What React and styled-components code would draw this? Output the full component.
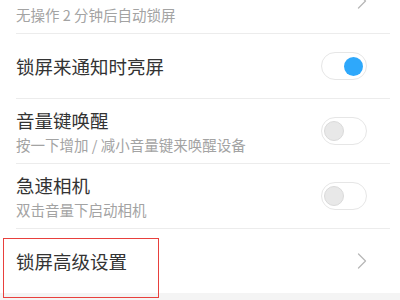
import React from "react";
import styled, { createGlobalStyle } from "styled-components";

const Global = createGlobalStyle`
  html, body {
    margin: 0;
    padding: 0;
    background: #ffffff;
    overflow: hidden;
  }
  body {
    font-family: "Noto Sans CJK SC", "Noto Sans", sans-serif;
  }
`;

const Page = styled.div`
  width: 400px;
  height: 300px;
  overflow: hidden;
  background: #f4f4f4;
`;

const List = styled.div`
  margin-top: -31px;
  background: #ffffff;
  display: flex;
  flex-direction: column;
`;

const Row = styled.div`
  position: relative;
  height: 64px;
  margin: 0 10px 0 16px;
  padding-right: 23px;
  display: flex;
  align-items: center;
  justify-content: space-between;
  border-bottom: ${(p) => (p.$last ? "none" : "1px solid #ececec")};
`;

const Texts = styled.div`
  display: flex;
  flex-direction: column;
`;

const Title = styled.div`
  font-size: 18.5px;
  line-height: 24px;
  color: #333333;
`;

const Sub = styled.div`
  font-size: 14.5px;
  line-height: 20px;
  margin-top: 3px;
  color: #a3a3a3;
`;

const Track = styled.div`
  position: relative;
  width: 46px;
  height: 28px;
  box-sizing: border-box;
  border: 1.5px solid #e6e6e6;
  border-radius: 14px;
  background: #ffffff;
  display: flex;
  align-items: center;
  justify-content: ${(p) => (p.$on ? "flex-end" : "flex-start")};
  padding: 0 2px;
`;

const Knob = styled.div`
  width: ${(p) => (p.$on ? "19px" : "20px")};
  height: ${(p) => (p.$on ? "19px" : "20px")};
  border-radius: 50%;
  box-sizing: border-box;
  background: ${(p) => (p.$on ? "#2ea8fb" : "#e8e8e8")};
  border: ${(p) => (p.$on ? "none" : "1px solid #dadada")};
  margin-right: ${(p) => (p.$on ? "1px" : "0")};
`;

const Highlight = styled.div`
  position: absolute;
  left: -13px;
  top: 9px;
  width: 156px;
  height: 60px;
  box-sizing: border-box;
  border: 1.5px solid #e8403d;
  pointer-events: none;
`;

const Chevron = () => (
  <svg width="10" height="16" viewBox="0 0 10 16">
    <polyline
      points="1.5,1 8.5,8 1.5,15"
      fill="none"
      stroke="#b8b8b8"
      strokeWidth="1.3"
      strokeLinejoin="round"
      strokeLinecap="round"
    />
  </svg>
);

const Switch = ({ on }) => (
  <Track $on={on}>
    <Knob $on={on} />
  </Track>
);

export default function App() {
  return (
    <Page>
      <Global />
      <List>
        <Row>
          <Texts>
            <Title>自动锁屏</Title>
            <Sub>无操作 2 分钟后自动锁屏</Sub>
          </Texts>
          <Chevron />
        </Row>
        <Row>
          <Texts>
            <Title>锁屏来通知时亮屏</Title>
          </Texts>
          <Switch on />
        </Row>
        <Row>
          <Texts>
            <Title>音量键唤醒</Title>
            <Sub>按一下增加 / 减小音量键来唤醒设备</Sub>
          </Texts>
          <Switch />
        </Row>
        <Row>
          <Texts>
            <Title>急速相机</Title>
            <Sub>双击音量下启动相机</Sub>
          </Texts>
          <Switch />
        </Row>
        <Row $last>
          <Texts>
            <Title>锁屏高级设置</Title>
          </Texts>
          <Chevron />
          <Highlight />
        </Row>
      </List>
    </Page>
  );
}
